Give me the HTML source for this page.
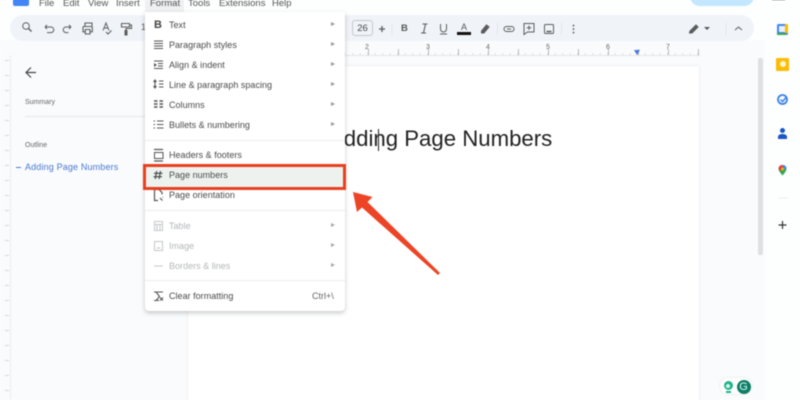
<!DOCTYPE html>
<html><head><meta charset="utf-8">
<style>
*{box-sizing:border-box}
html,body{margin:0;padding:0;width:800px;height:400px;overflow:hidden;background:#fff}
body{font-family:"Liberation Sans",sans-serif;position:relative}
#wrap{position:absolute;inset:0;filter:blur(.5px);background:#f9fbfd}
.a{position:absolute;white-space:nowrap}
.m{position:absolute;top:-3px;font-size:9.5px;color:#555;line-height:14px}
.mi{position:absolute;left:169px;font-size:9px;color:#4a4a4a;letter-spacing:.02px;line-height:12px;white-space:nowrap}
.d{color:#b4b6b8}
.ar{position:absolute;left:331px;width:0;height:0;border-left:4px solid #999;border-top:2.5px solid transparent;border-bottom:2.5px solid transparent}
.sep{position:absolute;left:145px;width:200px;height:1px;background:#ececec}
svg{position:absolute;overflow:visible}
.r{position:absolute;top:44px;font-size:7px;color:#666;line-height:8px}
</style></head><body>
<div id="wrap">
<!-- top -->
<div class="a" style="left:0;top:0;width:800px;height:40px;background:#fdfefe"></div>
<div class="a" style="left:13px;top:-6px;width:16px;height:12px;background:#4285f4;border-radius:2px"></div>
<div class="m" style="left:39px">File</div>
<div class="m" style="left:63px">Edit</div>
<div class="m" style="left:88px">View</div>
<div class="m" style="left:116px">Insert</div>
<div class="a" style="left:145px;top:0;width:39px;height:12px;background:#eef0f1"></div>
<div class="m" style="left:150px">Format</div>
<div class="m" style="left:188px">Tools</div>
<div class="m" style="left:219px">Extensions</div>
<div class="m" style="left:272px">Help</div>
<div class="a" style="left:690px;top:-14px;width:64px;height:20px;background:#c2e7ff;border-radius:10px"></div>
<div class="a" style="left:771px;top:-10px;width:15px;height:13px;background:#4a3a34;border-radius:50%"></div>

<!-- toolbar -->
<div class="a" style="left:10px;top:15px;width:744px;height:26px;background:#f0f4f9;border-radius:13px"></div>
<svg style="left:0;top:0" width="800" height="60" fill="none" stroke="#5c5c5c" stroke-width="1">
<circle cx="26" cy="26" r="3.3"/><path d="M28.500 28.500 31.500 31.500" stroke-width="1.400"/>
<path d="M45 27h6a2.800 2.800 0 0 1 0 5.600h-4M45 27l2-2M45 27l2 2"/>
<path d="M71 27h-5a2.800 2.800 0 0 0 0 5.600h2.500M71 27l-2-2M71 27l-2 2"/>
<path d="M83 26.500h8.500a.8.8 0 0 1 .8.800v4.500h-2.300M83 26.500v5.300h2.300" stroke-width="1.100"/>
<path d="M85 26v-3h7v3M85.300 29.500h4.700v4.500h-4.700z" stroke-width="1.100"/>
<path d="M103 30.500l3-7.500 3 7.500M104 28h4M106 32l2 2 3.500-3.500" />
<path d="M121.500 23.500h8v3.500h-8zM129.500 25h2v3.500h-5.500v2" stroke-width="1.100"/>
<path d="M125 30.500h2v4.500h-2z" fill="#5c5c5c"/>
<path d="M382 26v6M379 29h6" stroke-width="1.300"/>
<path d="M422.500 24h5M421 33h5M425.500 24l-2 9" stroke-width="1.100"/>
<path d="M440.500 24v5a3 3 0 0 0 6 0v-5M440 34h7"/>
<path d="M481.500 31l5-6 2.500 2-5 6h-2.500z" fill="#5c5c5c"/>
<rect x="504" y="26.500" width="10" height="5" rx="2.500"/><path d="M507 29h4"/>
<path d="M524 23.500h10v8.500h-6.500l-3.500 2.500zM529 25.500v4.500M526.700 27.800h4.600"/>
<rect x="544.500" y="24.500" width="9" height="9" rx="1"/><path d="M546.500 31.500h5" stroke-width="1.500"/>
<path d="M573.500 25.500v.1M573.500 29v.1M573.500 32.500v.1" stroke-width="1.800" stroke-linecap="round"/>
<path d="M689.500 33l.5-2 6-6 2 2-6 6z" fill="#5c5c5c"/>
<path d="M735 30l3.500-3 3.500 3"/>
<path d="M392 23v12M497.500 23v12M561.500 23v12M726 23v12" stroke="#e0e3e7" stroke-width=".8"/>
</svg>
<div class="a" style="left:141px;top:22px;font-size:9px;color:#555">1</div>
<div class="a" style="left:352px;top:20px;width:21px;height:16px;border:1px solid #c5c7c9;border-radius:3px;font-size:9.5px;color:#444;text-align:center;line-height:15px">26</div>
<div class="a" style="left:401px;top:23px;font-size:9.5px;font-weight:bold;color:#555">B</div>
<div class="a" style="left:461px;top:22px;font-size:9px;color:#555">A</div>
<div class="a" style="left:457px;top:32px;width:14px;height:2.500px;background:#111"></div>
<div class="a" style="left:704px;top:27px;width:0;height:0;border-top:3px solid #555;border-left:3px solid transparent;border-right:3px solid transparent"></div>

<!-- ruler -->
<div class="a" style="left:345px;top:55px;width:355px;height:1px;background:#e4e6e8"></div>
<div class="a" style="left:345px;top:52.500px;width:354px;height:2.500px;background:repeating-linear-gradient(90deg,#c4c4c4 0,#c4c4c4 .7px,transparent .7px,transparent 7.500px)"></div>
<div class="a" style="left:368px;top:49px;width:331px;height:6px;background:repeating-linear-gradient(90deg,#bbb 0,#bbb .8px,transparent .8px,transparent 30px)"></div>
<div class="r" style="left:365px">2</div>
<div class="r" style="left:426px">3</div>
<div class="r" style="left:486px">4</div>
<div class="r" style="left:546px">5</div>
<div class="r" style="left:606px">6</div>
<div class="r" style="left:666px">7</div>
<div class="a" style="left:634px;top:50px;width:0;height:0;border-top:5px solid #4a78d8;border-left:3.500px solid transparent;border-right:3.500px solid transparent"></div>

<!-- left ruler -->
<div class="a" style="left:5px;top:60px;height:340px;width:4px;background:repeating-linear-gradient(180deg,#d6d6d6 0,#d6d6d6 1px,transparent 1px,transparent 15px)"></div>
<div class="a" style="left:10px;top:55px;width:1px;height:345px;background:#eceef0"></div>

<!-- sidebar -->
<svg style="left:0;top:0" width="60" height="90" fill="none" stroke="#444" stroke-width="1.200"><path d="M36 72.500H27M31 67.500l-5 5 5 5"/></svg>
<div class="a" style="left:25px;top:99px;font-size:7px;color:#666">Summary</div>
<div class="a" style="left:25px;top:116px;width:120px;height:1px;background:#e4e6e8"></div>
<div class="a" style="left:25px;top:142px;font-size:7px;color:#666">Outline</div>
<div class="a" style="left:16px;top:166.500px;width:5px;height:1px;background:#4a78d0"></div>
<div class="a" style="left:25px;top:161px;font-size:9px;color:#4a78d0;letter-spacing:.15px;line-height:12px">Adding Page Numbers</div>

<!-- page -->
<div class="a" style="left:188px;top:66px;width:511px;height:340px;background:#fff;box-shadow:0 0 2px #dfe1e3"></div>
<div class="a" style="left:329px;top:126px;font-size:22.200px;color:#222;line-height:26px">Adding Page Numbers</div>
<div class="a" style="left:378px;top:129px;width:1px;height:22px;background:#222"></div>

<!-- scrollbar -->
<div class="a" style="left:758px;top:58px;width:5px;height:197px;background:#dfe0e2;border-radius:2px"></div>

<!-- right panel -->
<div class="a" style="left:765px;top:0;width:35px;height:400px;background:#fdfefe"></div>
<div class="a" style="left:777px;top:24px;width:11px;height:11px;background:#4285f4;border-radius:1.500px"></div>
<div class="a" style="left:779px;top:26px;width:6px;height:6px;background:#e8f0fe"></div>
<div class="a" style="left:785px;top:24px;width:3px;height:9px;background:#fbbc04"></div>
<div class="a" style="left:777px;top:33px;width:9px;height:2px;background:#34a853"></div>
<div class="a" style="left:776px;top:58px;width:13px;height:13px;background:#fbbc04;border-radius:1px"></div>
<div class="a" style="left:780px;top:61px;width:6px;height:6px;background:#fff6d0;border-radius:50%"></div>
<svg style="left:0;top:0" width="800" height="240" fill="none">
<circle cx="782.500" cy="99.500" r="4.500" stroke="#3b82e6" stroke-width="1.800"/>
<path d="M780.500 99.500l2 2 4-4.500" stroke="#3b82e6" stroke-width="1.500"/>
<circle cx="782.500" cy="130.500" r="2.500" fill="#1a56c4"/>
<path d="M778 139v-2c0-2 2-3 4.500-3s4.500 1 4.500 3v2z" fill="#1a56c4"/>
<path d="M782.500 165c-2.500 0-4 1.800-4 3.800 0 2.700 4 6.700 4 6.700s4-4 4-6.700c0-2-1.500-3.800-4-3.800z" fill="#34a853"/>
<path d="M778.500 168.800c0-2 1.500-3.800 4-3.800l2.500 1-5 5z" fill="#ea4335"/>
<path d="M782.500 165c2.500 0 4 1.800 4 3.800l-3 1z" fill="#4285f4"/>
<circle cx="782.500" cy="169" r="1.400" fill="#fbbc04"/>
<path d="M778 198h10" stroke="#eceeef"/>
<path d="M782.500 221v8M778.500 225h8" stroke="#333" stroke-width="1.200"/>
</svg>

<!-- grammarly -->
<div class="a" style="left:719px;top:377px;width:34px;height:18px;background:#fff;border-radius:9px;border:1px solid #eef0f1"></div>
<div class="a" style="left:723.500px;top:381px;width:9px;height:9px;background:#1fb38a;border-radius:50%"></div>
<div class="a" style="left:726px;top:383.500px;width:4px;height:4px;background:#d8f5ec;border-radius:50%"></div>
<div class="a" style="left:725.500px;top:390.500px;width:5px;height:2px;background:#1fb38a"></div>
<div class="a" style="left:736.500px;top:380px;width:14px;height:14px;background:#0f7d64;border-radius:50%;color:#dff;font-size:11px;text-align:center;line-height:14px">G</div>

<!-- menu -->
<div class="a" style="left:145px;top:12px;width:200px;height:299px;background:#fff;border-radius:0 0 4px 4px;box-shadow:0 2px 5px rgba(60,64,67,.28)"></div>
<div class="a" style="left:154px;top:19px;font-size:11px;font-weight:bold;color:#444;line-height:12px">B</div>
<div class="mi" style="top:19px">Text</div><div class="ar" style="top:22px"></div>
<div class="mi" style="top:39px">Paragraph styles</div><div class="ar" style="top:42px"></div>
<div class="mi" style="top:59px">Align &amp; indent</div><div class="ar" style="top:62px"></div>
<div class="mi" style="top:79px">Line &amp; paragraph spacing</div><div class="ar" style="top:82px"></div>
<div class="mi" style="top:99px">Columns</div><div class="ar" style="top:102px"></div>
<div class="mi" style="top:119px">Bullets &amp; numbering</div><div class="ar" style="top:122px"></div>
<div class="sep" style="top:140px"></div>
<div class="mi" style="top:149px">Headers &amp; footers</div>
<div class="a" style="left:145px;top:166px;width:199px;height:22px;background:#edf2ef"></div>
<div class="mi" style="top:169px">Page numbers</div>
<div class="mi" style="top:189px">Page orientation</div>
<div class="sep" style="top:210px"></div>
<div class="mi d" style="top:220px">Table</div><div class="ar" style="top:223px;border-left-color:#aaa"></div>
<div class="mi d" style="top:240px">Image</div><div class="ar" style="top:243px;border-left-color:#aaa"></div>
<div class="mi d" style="top:260px">Borders &amp; lines</div><div class="ar" style="top:263px;border-left-color:#aaa"></div>
<div class="sep" style="top:280px"></div>
<div class="mi" style="top:290px">Clear formatting</div>
<div class="a" style="left:312px;top:290px;font-size:9px;color:#666;line-height:12px">Ctrl+\</div>

<svg style="left:0;top:0" width="800" height="400" fill="none" stroke="#555" stroke-width="1">
<path d="M154 41h9M154 43.500h9M154 46h9M154 48.500h9"/>
<path d="M154 61h9M158 63.500h5M158 66h5M154 68.500h9"/><path d="M154 63l3 2-3 2z" fill="#555" stroke="none"/>
<path d="M155 80v8M153.500 82l1.500-2 1.500 2M153.500 86l1.500 2 1.500-2M159 81h4.500M159 84h4.500M159 87h4.500" stroke-width="1.100"/>
<path d="M154 101h3.500M154 104h3.500M154 107h3.500M159.500 101h3.500M159.500 104h3.500M159.500 107h3.500" stroke-width="1.500"/>
<path d="M157 121h6.500M157 124.500h6.500M157 128h6.500M153.500 121h1.500M153.500 124.500h1.500M153.500 128h1.500"/>
<rect x="154.500" y="152.500" width="8.500" height="6"/><path d="M154 149.500h9M154 161h9" stroke-width="1.200"/>
<path d="M156.700 171l-1.400 8M160.500 171l-1.400 8M154 173.300h8.500M153.500 176.700h8.500" stroke="#444" stroke-width="1.100"/>
<path d="M158 200.500h-3.500v-11h4.500l3 3v2" stroke-width="1.200"/><path d="M160 198l2.500 2.500M163 197v.5" stroke-width="1.200"/>
<g stroke="#c5c7c9"><rect x="154.500" y="221.500" width="8" height="9"/><path d="M154.500 224.500h8M157 224.500v6M160 224.500v6"/>
<rect x="154.500" y="241.500" width="8" height="9"/><path d="M156.500 248h4"/><path d="M154 266h9"/></g>
<path d="M154 292h9M156 292l3.500 4.500-3.500 4M154 300.500h5M160 297.500l3 3M163 297.500l-3 3" stroke-width="1.100"/>
</svg>

<!-- annotations -->
<div class="a" style="left:143px;top:164px;width:203px;height:26px;border:3px solid #e8401f"></div>
<svg style="left:0;top:0" width="800" height="400">
<path d="M353 192L372.500 197 367.500 202 440 273 438 275 362 207.500 357 212z" fill="#ec4424"/>
</svg>
</div>
</body></html>
